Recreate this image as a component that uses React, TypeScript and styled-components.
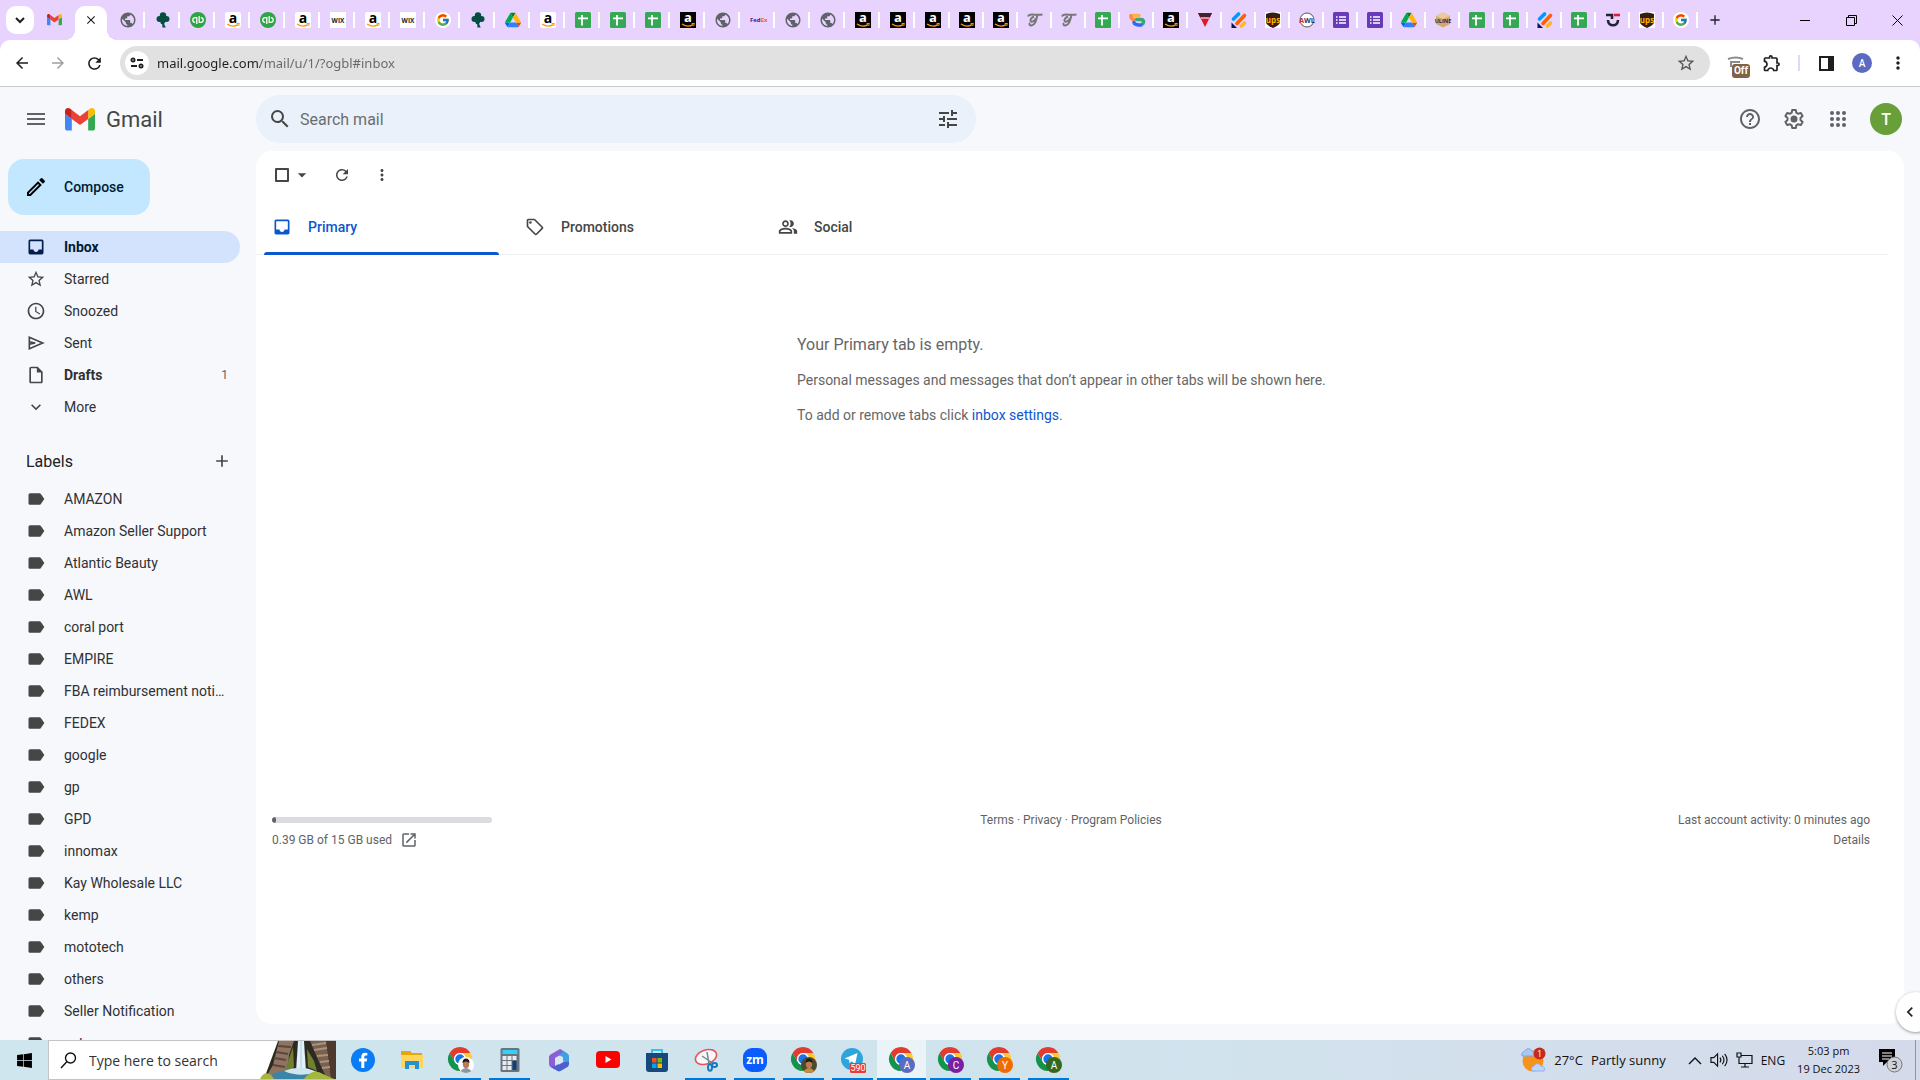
import React from 'react';

import styled, { createGlobalStyle } from 'styled-components';
import { FaWindows } from 'react-icons/fa';
import { FcGoogle } from 'react-icons/fc';
import {
  MdAdd,
  MdArrowBack,
  MdArrowDropDown,
  MdArrowForward,
  MdChevronLeft,
  MdClose,
  MdHelpOutline,
  MdInbox,
  MdKeyboardArrowDown,
  MdLabel,
  MdMenu,
  MdMoreVert,
  MdOpenInNew,
  MdOutlineExtension,
  MdOutlineInsertDriveFile,
  MdOutlineLocalOffer,
  MdOutlineModeEdit,
  MdOutlinePeopleAlt,
  MdPublic,
  MdRefresh,
  MdSchedule,
  MdSearch,
  MdStarBorder,
  MdTune,
} from 'react-icons/md';

const GlobalStyle = createGlobalStyle`
  * {
    box-sizing: border-box;
  }

  body {
    margin: 0;
    background: #f6f8fc;
    color: #202124;
    font-family: Roboto, 'Liberation Sans', sans-serif;
    font-size: 14px;
  }

  button {
    padding: 0;
    border: 0;
    background: none;
    color: inherit;
    font: inherit;
  }

  a {
    color: inherit;
    text-decoration: none;
  }

  svg {
    display: block;
    flex: none;
    overflow: visible;
  }
`;

const Shell = styled.div`
  display: flex;
  flex-direction: column;

  height: 100vh;
  overflow: hidden;
`;

/* Browser window */

const TabStrip = styled.div`
  display: flex;
  align-items: center;

  height: 40px;
  padding-left: 6px;

  background: #e8d3ff;
`;

const TabSearch = styled.button`
  display: grid;
  place-items: center;

  width: 28px;
  height: 28px;
  border-radius: 10px;

  background: #fff;
`;

const Tab = styled.button`
  position: relative;
  display: grid;
  place-items: center;

  width: 34px;
  height: 40px;

  &:nth-child(-n + 27) {
    width: 35px;
  }

  &::after {
    content: '';
    position: absolute;
    top: 12px;
    right: 0;
    width: 2px;
    height: 16px;
    background: #fff;
  }
`;

const PinnedTab = styled.button`
  display: grid;
  place-items: center;

  width: 41px;
  height: 40px;
`;

const ActiveTab = styled.button`
  position: relative;
  display: grid;
  place-items: center;
  align-self: flex-end;

  width: 32px;
  height: 34px;
  margin-right: 3px;
  padding-bottom: 6px;
  border-radius: 10px 10px 0 0;

  background: #fff;

  &::before,
  &::after {
    content: '';
    position: absolute;
    bottom: 0;
    width: 10px;
    height: 10px;
  }

  &::before {
    left: -10px;
    background: radial-gradient(circle at 0 0, transparent 10px, #fff 10px);
  }

  &::after {
    right: -10px;
    background: radial-gradient(circle at 100% 0, transparent 10px, #fff 10px);
  }
`;

const NewTab = styled.button`
  display: grid;
  place-items: center;

  width: 34px;
  height: 28px;
`;

const WindowButtons = styled.div`
  display: flex;

  margin-left: auto;
`;

const WindowButton = styled.button`
  display: grid;
  place-items: center;

  width: 46px;
  height: 40px;
`;

const AddressBar = styled.div`
  height: 47px;
  border-bottom: 1px solid #c7c9cc;

  background: linear-gradient(#e8d3ff, #e8d3ff) top / 100% 10px no-repeat;
`;

const AddressInner = styled.div`
  display: flex;
  align-items: center;

  height: 46px;
  padding: 0 4px;
  border-radius: 10px 10px 0 0;

  background: #fff;
`;

const BarButton = styled.button`
  display: grid;
  place-items: center;

  width: 36px;
  height: 34px;

  color: #1f1f1f;

  &:disabled {
    color: #a0a0a0;
  }
`;

const Omnibox = styled.div`
  display: flex;
  align-items: center;
  flex: 1;

  height: 34px;
  margin: 0 8px;
  padding: 0 14px 0 5px;
  border-radius: 17px;

  background: #e1e1e1;
`;

const SiteInfo = styled.button`
  display: grid;
  place-items: center;

  width: 24px;
  height: 24px;
  border-radius: 50%;

  background: #fff;
`;

const UrlInput = styled.input`
  flex: 1;

  min-width: 0;
  margin-left: 8px;
  padding: 0;
  border: 0;
  outline: 0;

  /* The host is darker than the path. */
  background: linear-gradient(90deg, #1f1f1f 103px, #666 103px);
  background-clip: text;
  -webkit-text-fill-color: transparent;

  font: 13px 'Noto Sans', 'Open Sans', sans-serif;
`;

const ExtensionButton = styled(BarButton)`
  position: relative;
`;

const OffBadge = styled.span`
  position: absolute;
  right: 4px;
  bottom: 2px;

  width: 18px;
  border-radius: 3px;

  background: #806246;
  color: #fff;

  font-weight: bold;
  font-size: 10px;
  line-height: 14px;
  text-align: center;
`;

const BarDivider = styled.span`
  width: 2px;
  height: 16px;
  margin: 0 8px;

  background: #e8d3ff;
`;

const Avatar = styled.button<{ $size: number; $color: string }>`
  display: grid;
  place-items: center;

  width: ${({ $size }) => $size}px;
  height: ${({ $size }) => $size}px;
  border-radius: 50%;

  background: ${({ $color }) => $color};
  color: #fff;

  font-weight: 500;
  font-size: ${({ $size }) => $size / 2}px;
`;

/* Mail */

const Mail = styled.div`
  position: relative;
  display: flex;
  flex-direction: column;
  flex: 1;

  min-height: 0;
`;

const Header = styled.header`
  display: flex;
  align-items: center;

  height: 64px;
  padding-right: 18px;
`;

const Brand = styled.div`
  display: flex;
  align-items: center;

  width: 256px;
  padding-left: 24px;

  color: #5f6368;
`;

const BrandLink = styled.a`
  display: flex;
  align-items: center;
  gap: 11px;

  margin-left: 17px;

  color: #444746;

  font-size: 22px;
`;

const SearchForm = styled.form`
  display: flex;
  align-items: center;
  flex: 0 1 720px;

  height: 48px;
  padding: 0 16px 0 12px;
  border-radius: 24px;

  background: #eaf1fb;
  color: #444746;
`;

const SearchInput = styled.input`
  flex: 1;

  min-width: 0;
  margin: 0 8px;
  padding: 0;
  border: 0;
  outline: 0;

  background: none;
  color: #444746;

  font: 16px Roboto, sans-serif;

  &::placeholder {
    color: #6b6e70;
  }
`;

const HeaderActions = styled.div`
  display: flex;
  align-items: center;
  gap: 20px;

  margin-left: auto;

  color: #5f6368;
`;

const Body = styled.div`
  display: flex;
  flex: 1;

  min-height: 0;
`;

const Sidebar = styled.nav`
  flex: 0 0 256px;

  padding-top: 8px;
  overflow: hidden;
`;

const ComposeButton = styled.button`
  display: flex;
  align-items: center;
  gap: 16px;

  min-width: 142px;
  height: 56px;
  margin: 0 0 16px 8px;
  padding: 0 16px;
  border-radius: 16px;

  background: #c2e7ff;
  color: #001d35;

  font-weight: 500;

  & svg {
    color: #000;
  }
`;

const NavList = styled.ul`
  margin: 0;
  padding: 0;

  list-style: none;
`;

const NavLink = styled.a<{ $active?: boolean; $strong?: boolean }>`
  display: flex;
  align-items: center;
  gap: 18px;

  height: 32px;
  margin-right: 16px;
  padding: 0 12px 0 26px;
  border-radius: 0 16px 16px 0;

  background: ${({ $active }) => ($active ? '#d3e3fd' : 'transparent')};
  color: ${({ $active }) => ($active ? '#001d35' : '#303134')};

  font-weight: ${({ $active, $strong }) => ($active || $strong ? 700 : 400)};

  & svg {
    color: ${({ $active }) => ($active ? '#041e49' : '#444746')};
  }
`;

const NavText = styled.span`
  flex: 1;

  overflow: hidden;

  text-overflow: ellipsis;
  white-space: nowrap;
`;

const NavCount = styled.span`
  color: #5f6368;

  font-weight: 400;
  font-size: 12px;
`;

const LabelsHeader = styled.div`
  display: flex;
  align-items: center;
  justify-content: space-between;

  height: 44px;
  margin-top: 16px;
  padding: 0 24px 0 26px;

  & > h2 {
    margin: 0;

    font-weight: 400;
    font-size: 16px;
  }
`;

const Panel = styled.main`
  display: flex;
  flex-direction: column;
  flex: 1;

  margin: 0 16px 16px 0;
  padding-right: 16px;
  border-radius: 16px;

  background: #fff;
`;

const Toolbar = styled.div`
  display: flex;
  align-items: center;

  height: 48px;
  padding-left: 19px;

  color: #444746;

  & > button {
    margin-left: 22px;
  }
`;

const SelectAll = styled.input`
  appearance: none;

  width: 14px;
  height: 14px;
  margin: 0;
  border: 2px solid #444746;
  border-radius: 1px;
`;

const SelectMenu = styled.button`
  && {
    margin: 0 -1px 0 3px;
  }
`;

const Categories = styled.div`
  display: flex;

  height: 56px;
  padding-left: 8px;
  border-bottom: 1px solid #eceff1;
`;

const Category = styled.button<{ $active?: boolean }>`
  position: relative;
  display: flex;
  align-items: center;
  gap: 16px;
  flex: 0 1 253px;

  padding-left: 8px;

  color: ${({ $active }) => ($active ? '#0b57d0' : '#444746')};

  font-weight: 500;

  &::after {
    content: '';
    position: absolute;
    right: 18px;
    bottom: -1px;
    left: 0;
    height: ${({ $active }) => ($active ? 3 : 0)}px;
    border-radius: 3px 3px 0 0;
    background: #0b57d0;
  }
`;

const EmptyState = styled.section`
  align-self: center;

  min-width: 540px;
  margin: 78px 10px 0 0;

  color: #666;

  & > h3 {
    margin: 0 0 13px;

    font-weight: 400;
    font-size: 16px;
    line-height: 24px;
  }

  & > p {
    margin: 0 0 15px;

    line-height: 20px;
  }

  & a {
    color: #0b57d0;
  }
`;

const Footer = styled.footer`
  display: grid;
  grid-template-columns: 1fr auto 1fr;

  margin-top: 370px;
  padding: 0 18px 0 16px;

  color: #5f6368;

  font-size: 12px;
  line-height: 20px;
`;

const StorageMeter = styled.div`
  width: 220px;
  height: 6px;
  margin: 7px 0;
  overflow: hidden;
  border-radius: 3px;

  background: #dadce0;
`;

const StorageFill = styled.div`
  width: 4px;
  height: 6px;
  border-radius: 2px;

  background: #5f6368;
`;

const StorageLink = styled.a`
  display: flex;
  align-items: center;
  gap: 8px;
`;

const Activity = styled.div`
  text-align: right;
`;

const SidePanelToggle = styled.button`
  position: absolute;
  right: -16px;
  bottom: 8px;
  display: flex;
  align-items: center;

  width: 40px;
  height: 40px;
  padding-left: 4px;
  border-radius: 50%;

  background: #fff;
  box-shadow: 0 1px 3px rgba(60, 64, 67, 0.5);
`;

/* Desktop taskbar */

const Taskbar = styled.div`
  display: flex;
  align-items: stretch;
  flex: none;

  height: 40px;

  background: linear-gradient(90deg, #cfe6ee, #d0e3ed 60%, #d5daea);
  color: #111;

  font-family: 'Open Sans', 'Noto Sans', sans-serif;
`;

const StartButton = styled.button`
  display: grid;
  place-items: center;

  width: 48px;
`;

const DesktopSearch = styled.label`
  display: flex;
  align-items: center;
  gap: 12px;

  width: 288px;
  margin-right: 2px;
  padding-left: 11px;
  border: 1px solid #c4c4c4;
  border-right: 0;

  background: #fff;

  & > input {
    flex: 1;

    min-width: 0;
    padding: 0;
    border: 0;
    outline: 0;

    background: none;

    font: 14px 'Open Sans', sans-serif;
  }

  & > input::placeholder {
    color: #333;
  }
`;

const TaskButton = styled.button<{ $running?: boolean; $focused?: boolean }>`
  position: relative;
  display: grid;
  place-items: center;

  width: 49px;

  background: ${({ $focused }) => ($focused ? '#eaf3f7' : 'transparent')};

  &::after {
    content: '';
    position: absolute;
    right: ${({ $focused }) => ($focused ? 0 : 4)}px;
    bottom: 0;
    left: ${({ $focused }) => ($focused ? 0 : 4)}px;
    height: ${({ $running }) => ($running ? 2 : 0)}px;
    background: #0078d7;
  }
`;

const Tray = styled.div`
  display: flex;
  align-items: center;

  margin-left: auto;
  padding-right: 4px;

  font-size: 12px;
`;

const Weather = styled.button`
  display: flex;
  align-items: center;
  gap: 8px;

  margin-right: 22px;

  font-size: 13px;
`;

const TrayIcons = styled.div`
  display: flex;
  align-items: center;
  gap: 8px;
`;

const Clock = styled.button`
  margin: 0 18px 0 12px;

  font-size: 11px;
  line-height: 18px;
  text-align: center;
  white-space: nowrap;
`;

const ShowDesktop = styled.span`
  align-self: stretch;

  width: 1px;
  margin-left: 12px;

  background: #8d95a3;
`;

const svgText = { fontFamily: 'Open Sans, sans-serif', fontWeight: 700 };

const GmailMark: React.FC<{ width: number }> = ({ width }) => (
  <svg width={width} height={(width * 3) / 4} viewBox="52 42 88 66">
    <path fill="#4285f4" d="M58 108h14V74L52 59v43c0 3.32 2.69 6 6 6" />
    <path fill="#34a853" d="M120 108h14c3.32 0 6-2.69 6-6V59l-20 15" />
    <path fill="#fbbc04" d="M120 48v26l20-15v-8c0-7.42-8.47-11.65-14.4-7.2" />
    <path fill="#ea4335" d="M72 74V48l24 18 24-18v26L96 92" />
    <path fill="#c5221f" d="M52 51v8l20 15V48l-5.6-4.2c-5.94-4.45-14.4-.22-14.4 7.2" />
  </svg>
);

const SendIcon: React.FC<{ size?: number }> = ({ size }) => (
  <svg width={size} height={size} viewBox="0 0 24 24" fill="none" stroke="currentColor" strokeWidth="2">
    <path d="M4 5l16 7-16 7zM4 10.500l7 1.500-7 1.500" />
  </svg>
);

const AmazonIcon: React.FC<{ dark?: boolean }> = ({ dark }) => (
  <svg width="16" height="16" viewBox="0 0 16 16">
    <rect width="16" height="16" rx={dark ? 0 : 2} fill={dark ? '#000' : '#fff'} />
    <text
      x="8"
      y={dark ? 10 : 11}
      textAnchor="middle"
      fontSize={dark ? 13 : 14}
      fill={dark ? '#fff' : '#000'}
      style={svgText}
    >
      a
    </text>
    <path d="M2 12q6 4 11 .6" fill="none" stroke="#f90" strokeWidth="1.4" />
    <path d="M11.6 11.6l2.8-.2-.8 2.6" fill="none" stroke="#f90" />
  </svg>
);

const SheetsIcon = () => (
  <svg width="16" height="16" viewBox="0 0 16 16">
    <rect width="16" height="16" rx="1.5" fill="#34a853" />
    <path d="M3 6.3h10M7 3v10.5" stroke="#fff" strokeWidth="1.8" />
  </svg>
);

const FormsIcon = () => (
  <svg width="16" height="16" viewBox="0 0 16 16">
    <rect width="16" height="16" rx="1.5" fill="#673ab7" />
    <path d="M6 5h7M6 8h7M6 11h7M3 5h1.5M3 8h1.5M3 11h1.5" stroke="#fff" strokeWidth="1.6" />
  </svg>
);

const CloverIcon = () => (
  <svg width="16" height="16" viewBox="0 0 16 16" fill="#044e42">
    <circle cx="8" cy="3.4" r="3.2" />
    <circle cx="4.5" cy="7" r="3" />
    <circle cx="11.5" cy="7" r="3" />
    <path d="M7 6h2.500l-.8 5 2 4.500H7.500L7 11zM5 9h6l-2 3H6z" />
  </svg>
);

const QuickbooksIcon = () => (
  <svg width="16" height="16" viewBox="0 0 16 16">
    <circle cx="8" cy="8" r="8" fill="#2ca543" />
    <g fill="none" stroke="#fff" strokeWidth="1.3">
      <path d="M6.800 12V5.600H5.200a2.400 2.400 0 0 0 0 4.800" />
      <path d="M9.200 4v6.400h1.600a2.400 2.400 0 0 0 0-4.800" />
    </g>
  </svg>
);

const DriveIcon = () => (
  <svg width="16" height="16" viewBox="0 0 87.3 78">
    <path fill="#0066da" d="m6.6 66.85 3.85 6.65c.8 1.4 1.95 2.5 3.3 3.3l13.75-23.8h-27.5c0 1.55.4 3.1 1.2 4.5z" />
    <path fill="#00ac47" d="m43.65 25-13.75-23.8c-1.35.8-2.5 1.9-3.3 3.3l-25.4 44a9.06 9.06 0 0 0 -1.2 4.5h27.5z" />
    <path fill="#ea4335" d="m73.55 76.8c1.35-.8 2.5-1.9 3.3-3.3l1.6-2.75 7.65-13.25c.8-1.4 1.2-2.95 1.2-4.5h-27.502l5.852 11.5z" />
    <path fill="#00832d" d="m43.65 25 13.75-23.8c-1.35-.8-2.9-1.2-4.5-1.2h-18.5c-1.6 0-3.15.45-4.5 1.2z" />
    <path fill="#2684fc" d="m59.8 53h-32.3l-13.75 23.8c1.35.8 2.9 1.2 4.5 1.2h50.8c1.6 0 3.15-.45 4.5-1.2z" />
    <path fill="#ffba00" d="m73.4 26.5-12.7-22c-.8-1.4-1.95-2.5-3.3-3.3l-13.75 23.8 16.15 28h27.45c0-1.55-.4-3.1-1.2-4.5z" />
  </svg>
);

const WixIcon = () => (
  <svg width="16" height="16" viewBox="0 0 16 16">
    <rect width="16" height="16" fill="#fff" />
    <text x="8" y="10.500" textAnchor="middle" fontSize="6.500" fill="#222" style={svgText}>
      WIX
    </text>
  </svg>
);

const FedexIcon = () => (
  <svg width="16" height="16" viewBox="0 0 16 16">
    <text x="0" y="10" fontSize="6" fill="#4d148c" style={svgText}>
      Fed<tspan fill="#ff6200">Ex</tspan>
    </text>
  </svg>
);

const ScriptIcon = () => (
  <svg width="16" height="16" viewBox="0 0 16 16" fill="none" stroke="#777" strokeWidth="2">
    <path d="M1 4.500C2 1 8 3.500 15.500 2.500M10.500 3C9 9 8 13 4.500 13.500c-2 .2-2.500-1.500-1.500-2.500M7 4.500C4 6 2.500 8 4 9.500c2 .8 4-1.500 5-3" />
  </svg>
);

const RibbonIcon = () => (
  <svg width="16" height="16" viewBox="0 0 16 16" fill="none" strokeWidth="3.600" strokeLinecap="round">
    <path d="M2 3.500h8" stroke="#fbb04c" />
    <path d="M2 4C2 7 3 7.500 6 7.500" stroke="#f98c4c" />
    <path d="M8 7.500h4c2.500 0 3 2 2 4" stroke="#34a877" />
    <path d="M5 10.500q1 3 7 2.500" stroke="#2d6bf6" />
  </svg>
);

const TriangleIcon = () => (
  <svg width="16" height="16" viewBox="0 0 16 16">
    <path d="M1 1h14L8 15z" fill="#e0182d" />
    <path d="M1 1h14l-2 4H3z" fill="#46202f" />
    <path d="M4 6h8" stroke="#fff" />
  </svg>
);

const JotformIcon = () => (
  <svg width="16" height="16" viewBox="0 0 16 16" fill="none" strokeWidth="3.600" strokeLinecap="round">
    <path d="M2.500 7L7.500 2" stroke="#0099ff" />
    <path d="M6 11.500l7.500-8" stroke="#ff6100" />
    <path d="M10.500 14l3-3" stroke="#ffb629" />
    <path d="M.5 10.500V16H6z" fill="#0a1551" />
  </svg>
);

const UpsIcon = () => (
  <svg width="16" height="16" viewBox="0 0 16 16">
    <rect width="16" height="16" fill="#fff" />
    <path d="M1 2q7-3 14 0v8q0 3-7 6-7-3-7-6z" fill="#351c15" />
    <text x="8" y="11" textAnchor="middle" fontSize="8" fill="#ffb500" style={svgText}>
      ups
    </text>
  </svg>
);

const RoundelIcon = () => (
  <svg width="16" height="16" viewBox="0 0 16 16">
    <circle cx="8" cy="8" r="7" fill="#fff" stroke="#555" />
    <text x="8" y="10.500" textAnchor="middle" fontSize="7" fill="#26386e" style={svgText}>
      <tspan fill="#d7263d">A</tspan>WL
    </text>
  </svg>
);

const UlineIcon = () => (
  <svg width="16" height="16" viewBox="0 0 16 16">
    <path d="M1 4l7-3.500L15 4v8l-7 3.500L1 12z" fill="#d3a86f" />
    <path d="M1 4l7 3 7-3-7-3.500z" fill="#ebcb9a" />
    <text x="8" y="11" textAnchor="middle" fontSize="5.500" fill="#1b2a55" style={svgText}>
      ULINE
    </text>
  </svg>
);

const HookIcon = () => (
  <svg width="16" height="16" viewBox="0 0 16 16" fill="none" strokeWidth="2.600">
    <path d="M1 3h6v4" stroke="#20242e" />
    <path d="M9 3h6" stroke="#e11d36" />
    <path d="M3 8c0 7 10 7 10 0" stroke="#20242e" />
  </svg>
);

const GlobeIcon = () => <MdPublic size={18} color="#5f6368" />;
const DarkAmazonIcon = () => <AmazonIcon dark />;
const GoogleIcon = () => (
  <svg width="16" height="16" viewBox="0 0 16 16">
    <circle cx="8" cy="8" r="8" fill="#fff" />
    <FcGoogle x="1" y="1" size={14} />
  </svg>
);

const tabs: { name: string; Icon: React.FC }[] = [
  { name: 'Web page', Icon: GlobeIcon },
  { name: 'Clover', Icon: CloverIcon },
  { name: 'QuickBooks', Icon: QuickbooksIcon },
  { name: 'Amazon', Icon: AmazonIcon },
  { name: 'QuickBooks', Icon: QuickbooksIcon },
  { name: 'Amazon', Icon: AmazonIcon },
  { name: 'Wix', Icon: WixIcon },
  { name: 'Amazon', Icon: AmazonIcon },
  { name: 'Wix', Icon: WixIcon },
  { name: 'Google', Icon: GoogleIcon },
  { name: 'Clover', Icon: CloverIcon },
  { name: 'Drive', Icon: DriveIcon },
  { name: 'Amazon', Icon: AmazonIcon },
  { name: 'Sheets', Icon: SheetsIcon },
  { name: 'Sheets', Icon: SheetsIcon },
  { name: 'Sheets', Icon: SheetsIcon },
  { name: 'Amazon', Icon: DarkAmazonIcon },
  { name: 'Web page', Icon: GlobeIcon },
  { name: 'FedEx', Icon: FedexIcon },
  { name: 'Web page', Icon: GlobeIcon },
  { name: 'Web page', Icon: GlobeIcon },
  { name: 'Amazon', Icon: DarkAmazonIcon },
  { name: 'Amazon', Icon: DarkAmazonIcon },
  { name: 'Amazon', Icon: DarkAmazonIcon },
  { name: 'Amazon', Icon: DarkAmazonIcon },
  { name: 'Amazon', Icon: DarkAmazonIcon },
  { name: 'Shop', Icon: ScriptIcon },
  { name: 'Shop', Icon: ScriptIcon },
  { name: 'Sheets', Icon: SheetsIcon },
  { name: 'Dashboard', Icon: RibbonIcon },
  { name: 'Amazon', Icon: DarkAmazonIcon },
  { name: 'Store', Icon: TriangleIcon },
  { name: 'Jotform', Icon: JotformIcon },
  { name: 'UPS', Icon: UpsIcon },
  { name: 'AWL', Icon: RoundelIcon },
  { name: 'Forms', Icon: FormsIcon },
  { name: 'Forms', Icon: FormsIcon },
  { name: 'Drive', Icon: DriveIcon },
  { name: 'Uline', Icon: UlineIcon },
  { name: 'Sheets', Icon: SheetsIcon },
  { name: 'Sheets', Icon: SheetsIcon },
  { name: 'Jotform', Icon: JotformIcon },
  { name: 'Sheets', Icon: SheetsIcon },
  { name: 'Tactical', Icon: HookIcon },
  { name: 'UPS', Icon: UpsIcon },
  { name: 'Google', Icon: GoogleIcon },
];

const folders = [
  { name: 'Inbox', Icon: MdInbox, active: true },
  { name: 'Starred', Icon: MdStarBorder },
  { name: 'Snoozed', Icon: MdSchedule },
  { name: 'Sent', Icon: SendIcon },
  { name: 'Drafts', Icon: MdOutlineInsertDriveFile, count: 1 },
  { name: 'More', Icon: MdKeyboardArrowDown },
];

const labels = [
  'AMAZON',
  'Amazon Seller Support',
  'Atlantic Beauty',
  'AWL',
  'coral port',
  'EMPIRE',
  'FBA reimbursement notification',
  'FEDEX',
  'google',
  'gp',
  'GPD',
  'innomax',
  'Kay Wholesale LLC',
  'kemp',
  'mototech',
  'others',
  'Seller Notification',
  'set',
];

interface ChromeIconProps {
  letter?: string;
  color?: string;
  photo?: 'white' | 'forest';
}

/**
 * The Chrome logo with the badge of the profile that the window belongs to.
 */
const ChromeIcon: React.FC<ChromeIconProps> = ({ letter, color, photo }) => (
  <svg width="26" height="26" viewBox="0 0 26 26">
    <g transform="scale(.5)">
      <path fill="#e33b2e" d="M24 12h20.800A24 24 0 0 0 3.200 12L13.600 30A12 12 0 0 1 24 12z" />
      <path fill="#16934a" d="M13.600 30 3.200 12A24 24 0 0 0 24 48L34.400 30a12 12 0 0 1-20.800 0z" />
      <path fill="#fcc934" d="M24 12a12 12 0 0 1 10.400 18L24 48A24 24 0 0 0 44.800 12z" />
      <circle cx="24" cy="24" r="12" fill="#fff" />
      <circle cx="24" cy="24" r="9.400" fill="#1a73e8" />
    </g>
    {letter && (
      <>
        <circle cx="18" cy="18" r="8" fill={color} />
        <text x="18" y="21.500" textAnchor="middle" fontSize="10" fill="#fff" fontFamily="Roboto">
          {letter}
        </text>
      </>
    )}
    {photo && (
      <>
        <circle cx="18" cy="18" r="8" fill={photo === 'white' ? '#fff' : '#4d4a2b'} />
        <path d="M12.500 24q5.500-6 11 0-5.500 4-11 0z" fill={photo === 'white' ? '#8b95a5' : '#c98b3c'} />
        <ellipse cx="18" cy="17" rx="3.200" ry="4.200" fill="#b97b56" />
        <path d="M14.500 16q0-4.500 3.500-4.500t3.500 4.500q-3.500-3-7 0z" fill="#221a17" />
      </>
    )}
  </svg>
);

const FacebookIcon = () => (
  <svg width="24" height="24" viewBox="0 0 24 24">
    <circle cx="12" cy="12" r="12" fill="#0a7cf5" />
    <path d="M13.300 20v-6.500h2.400l.5-2.900h-2.900V9c0-.9.4-1.600 1.700-1.600h1.300V5q-6-1.200-6 3.600v2H8v2.900h2.300V20z" fill="#fff" />
  </svg>
);

const FolderIcon = () => (
  <svg width="22" height="20" viewBox="0 0 22 20">
    <path d="M0 1h9l2 2h10v15H0z" fill="#e5a50f" />
    <path d="M0 5h22v13H0z" fill="#ffd65c" />
    <path d="M4 11h14v8h-4v-4H8v4H4z" fill="#2590d5" />
  </svg>
);

const CalculatorIcon = () => (
  <svg width="20" height="24" viewBox="0 0 20 24">
    <rect width="19" height="24" x=".5" rx="1.500" fill="#6a7480" />
    <rect width="15" height="4" x="2.500" y="2" fill="#35d0f5" />
    <path d="M4.500 8v14M9.500 8v14M14.500 8v5" stroke="#e8ecef" strokeWidth="4" strokeDasharray="4 1" />
    <path d="M14.500 13v9" stroke="#123f7d" strokeWidth="4" />
  </svg>
);

const OfficeIcon = () => (
  <svg width="20" height="24" viewBox="0 0 20 24">
    <path d="M11 1L1.500 6.500Q0 7.500 0 9v7q0 2 1.500 3L6 21.500V10l8-4.500V3q-1-1.500-3-2z" fill="#8b5fd6" />
    <path d="M14 2.500l4.500 3Q20 6.500 20 8v8l-6-3.500V9L9.500 7 14 4z" fill="#3fa0e4" />
    <path d="M20 14v2q0 2-1.500 3L11.500 23q-1.500.8-3 0L2 19l5-1.500 7-4z" fill="#4f5fd2" />
    <path d="M10 8l4 2.200v4L10 16.500l-4-2.300v-4z" fill="#d9e6f0" />
  </svg>
);

const YoutubeIcon = () => (
  <svg width="24" height="18" viewBox="0 0 24 18">
    <rect width="24" height="17" rx="4" fill="#f00" />
    <path d="M9.500 5l6 3.500-6 3.500z" fill="#fff" />
  </svg>
);

const StoreIcon = () => (
  <svg width="24" height="24" viewBox="0 0 24 24">
    <path d="M7 6V2h10v4" fill="none" stroke="#35c1f1" strokeWidth="2" />
    <path d="M1 5h22v16q0 3-3 3H4q-3 0-3-3z" fill="#174a7c" />
    <path d="M7 10h4.500v4.500H7z" fill="#f25022" />
    <path d="M12.500 10H17v4.500h-4.500z" fill="#7fba00" />
    <path d="M7 15.500h4.500V20H7z" fill="#00a4ef" />
    <path d="M12.500 15.500H17V20h-4.500z" fill="#ffb900" />
  </svg>
);

const SnipIcon = () => (
  <svg width="24" height="24" viewBox="0 0 24 24" fill="none">
    <ellipse cx="12" cy="9" rx="11" ry="7" fill="#f6f8fa" stroke="#e0555e" strokeWidth="1.500" transform="rotate(-20 12 9)" />
    <path d="M13 4l2 12M8 8l12 8" stroke="#7c8791" strokeWidth="1.500" />
    <ellipse cx="16" cy="19.500" rx="2" ry="3.200" stroke="#1479bf" strokeWidth="2" />
    <ellipse cx="20.500" cy="17" rx="2.500" ry="2" stroke="#1479bf" strokeWidth="2" />
  </svg>
);

const ZoomIcon = () => (
  <svg width="24" height="24" viewBox="0 0 24 24">
    <rect width="24" height="24" rx="9" fill="#0b5cff" />
    <text x="12" y="16" textAnchor="middle" fontSize="12" fill="#fff" style={svgText}>
      zm
    </text>
  </svg>
);

const TelegramIcon = () => (
  <svg width="26" height="26" viewBox="0 0 26 26">
    <circle cx="12" cy="12" r="11" fill="#2ca5dc" />
    <path d="M4.500 11.500L17.500 6l-2.300 11-3.700-2.700-2 2-.5-3.500z" fill="#fff" />
    <rect x="10" y="16" width="16" height="10" rx="1.500" fill="#ee3a36" />
    <text x="18" y="24" textAnchor="middle" fontSize="9" fill="#fff" fontFamily="Roboto">
      590
    </text>
  </svg>
);

const Waterfall = () => (
  <svg width="76" height="38" viewBox="0 0 76 38">
    <path d="M18 0h58v38H4z" fill="#2c2a22" />
    <path d="M19 0h15l-5 14-2 24H5l8-14z" fill="#8f7462" />
    <path d="M18 5l13 1M16 11l12 2M14 17l12 2M13 24l12 2" stroke="#5d473a" strokeWidth="2" />
    <path d="M33 6l-7 20 1 6 7-6z" fill="#70802f" />
    <path d="M47 8l7 12 3 10-9-4z" fill="#70802f" />
    <path d="M38 0h6l2 31H36z" fill="#e3f1f8" />
    <path d="M41 0v30" stroke="#a3cbe0" />
    <path d="M12 33q25-9 48 0l-4 5H14z" fill="#3a84aa" />
    <path d="M24 30q17-7 33 1-17 6-33-1z" fill="#cfe6f1" />
    <path d="M50 0h26v38h-9l-8-17z" fill="#7a604e" />
    <path d="M66 0h10v38h-5z" fill="#4d392d" />
    <path d="M52 4l14-2M54 9l13-2M57 15l11-1M60 21l9-1M62 27l8-1" stroke="#ad937c" strokeWidth="2" />
    <path d="M0 38q4-9 11-4l3 4zM44 38q9-12 19-5l11 5z" fill="#a3b83c" />
  </svg>
);

const apps: { name: string; icon: React.ReactNode; running?: boolean; focused?: boolean }[] = [
  { name: 'Facebook', icon: <FacebookIcon /> },
  { name: 'File Explorer', icon: <FolderIcon /> },
  { name: 'Chrome', icon: <ChromeIcon photo="white" />, running: true },
  { name: 'Calculator', icon: <CalculatorIcon />, running: true },
  { name: 'Microsoft 365', icon: <OfficeIcon /> },
  { name: 'YouTube', icon: <YoutubeIcon /> },
  { name: 'Microsoft Store', icon: <StoreIcon /> },
  { name: 'Snipping Tool', icon: <SnipIcon />, running: true },
  { name: 'Zoom', icon: <ZoomIcon />, running: true },
  { name: 'Chrome', icon: <ChromeIcon photo="forest" />, running: true },
  { name: 'Telegram', icon: <TelegramIcon />, running: true },
  { name: 'Chrome', icon: <ChromeIcon letter="A" color="#5c6bc0" />, running: true, focused: true },
  { name: 'Chrome', icon: <ChromeIcon letter="C" color="#7b1fa2" />, running: true },
  { name: 'Chrome', icon: <ChromeIcon letter="Y" color="#ef6c00" />, running: true },
  { name: 'Chrome', icon: <ChromeIcon letter="A" color="#33691e" />, running: true },
];

const BrowserChrome = () => (
  <>
    <TabStrip>
      <TabSearch aria-label="Search tabs">
        <svg width="10" height="8" viewBox="0 0 10 8" fill="none" stroke="#1f1f1f" strokeWidth="2">
          <path d="M1 2l4 4 4-4" />
        </svg>
      </TabSearch>
      <PinnedTab aria-label="Gmail">
        <GmailMark width={15} />
      </PinnedTab>
      <ActiveTab aria-label="Close tab">
        <MdClose size={14} />
      </ActiveTab>
      {tabs.map(({ name, Icon }, index) => (
        <Tab key={index} aria-label={name}>
          <Icon />
        </Tab>
      ))}
      <NewTab aria-label="New tab">
        <MdAdd size={16} />
      </NewTab>
      <WindowButtons>
        <WindowButton aria-label="Minimize">
          <svg width="10" height="10" stroke="#000">
            <path d="M0 5.500h10" />
          </svg>
        </WindowButton>
        <WindowButton aria-label="Restore">
          <svg width="11" height="11" fill="none" stroke="#000">
            <path d="M.5 2.500h8v8h-8zM2.500 2.500v-2h8v8h-2" />
          </svg>
        </WindowButton>
        <WindowButton aria-label="Close">
          <svg width="11" height="11" stroke="#000">
            <path d="M.5.500l10 10M10.500.500l-10 10" />
          </svg>
        </WindowButton>
      </WindowButtons>
    </TabStrip>
    <AddressBar>
      <AddressInner>
        <BarButton aria-label="Back">
          <MdArrowBack size={18} />
        </BarButton>
        <BarButton aria-label="Forward" disabled>
          <MdArrowForward size={18} />
        </BarButton>
        <BarButton aria-label="Reload">
          <MdRefresh size={19} />
        </BarButton>
        <Omnibox>
          <SiteInfo aria-label="View site information">
            <svg width="14" height="12" viewBox="0 0 14 12" fill="none" stroke="#1f1f1f" strokeWidth="1.800">
              <circle cx="3" cy="3" r="1.600" />
              <circle cx="11" cy="9" r="1.600" />
              <path d="M7 3h6M1 9h6" />
            </svg>
          </SiteInfo>
          <UrlInput aria-label="Address" defaultValue="mail.google.com/mail/u/1/?ogbl#inbox" />
          <button aria-label="Bookmark this tab">
            <MdStarBorder size={20} color="#555" />
          </button>
        </Omnibox>
        <ExtensionButton aria-label="Extension">
          <svg width="18" height="14" viewBox="0 0 18 14" fill="none" stroke="#8c8c8c" strokeWidth="2">
            <path d="M1 3q8-3 15 0M3 6h10M4 6v5" />
          </svg>
          <OffBadge>Off</OffBadge>
        </ExtensionButton>
        <BarButton aria-label="Extensions">
          <MdOutlineExtension size={20} />
        </BarButton>
        <BarDivider />
        <BarButton aria-label="Side panel">
          <svg width="15" height="15" viewBox="0 0 15 15" fill="none" stroke="#1f1f1f" strokeWidth="2">
            <path d="M1 1h13v13H1z" />
            <path d="M11.500 1v13" strokeWidth="5" />
          </svg>
        </BarButton>
        <BarButton as="div">
          <Avatar $size={20} $color="#5c6bc0" aria-label="Profile">
            A
          </Avatar>
        </BarButton>
        <BarButton aria-label="Menu">
          <MdMoreVert size={20} />
        </BarButton>
      </AddressInner>
    </AddressBar>
  </>
);

const MailHeader = () => (
  <Header>
    <Brand>
      <button aria-label="Main menu">
        <MdMenu size={24} />
      </button>
      <BrandLink href="#inbox">
        <GmailMark width={30} />
        Gmail
      </BrandLink>
    </Brand>
    <SearchForm>
      <button type="button" aria-label="Search">
        <MdSearch size={24} />
      </button>
      <SearchInput aria-label="Search mail" placeholder="Search mail" />
      <button type="button" aria-label="Search options">
        <MdTune size={24} />
      </button>
    </SearchForm>
    <HeaderActions>
      <button aria-label="Support">
        <MdHelpOutline size={24} />
      </button>
      <button aria-label="Settings">
        <svg width="24" height="24" viewBox="0 0 24 24" fill="none" stroke="currentColor" strokeWidth="2">
          <path
            strokeLinejoin="round"
            d="M10.200 3h3.600l.5 2.700 1.900 1.100 2.600-.9 1.800 3.100-2.100 1.900v2.200l2.100 1.900-1.800 3.100-2.600-.9-1.900 1.100-.5 2.700h-3.600l-.5-2.700-1.900-1.100-2.600.9L3.400 15l2.100-1.900v-2.200L3.400 9l1.800-3.100 2.600.9 1.900-1.100z"
          />
          <circle cx="12" cy="12" r="3.500" fill="currentColor" stroke="none" />
        </svg>
      </button>
      <button aria-label="Google apps">
        <svg width="24" height="24" viewBox="0 0 24 24" fill="currentColor">
          {[6, 12, 18].map((y) =>
            [6, 12, 18].map((x) => <circle key={`${x}-${y}`} cx={x} cy={y} r="2" />)
          )}
        </svg>
      </button>
      <Avatar $size={32} $color="#689f38" aria-label="Google account">
        T
      </Avatar>
    </HeaderActions>
  </Header>
);

const MailSidebar = () => (
  <Sidebar>
    <ComposeButton>
      <MdOutlineModeEdit size={24} />
      Compose
    </ComposeButton>
    <NavList>
      {folders.map(({ name, Icon, active, count }) => (
        <li key={name}>
          <NavLink href={`#${name}`} $active={active} $strong={!!count}>
            <Icon size={20} />
            <NavText>{name}</NavText>
            {count && <NavCount>{count}</NavCount>}
          </NavLink>
        </li>
      ))}
    </NavList>
    <LabelsHeader>
      <h2>Labels</h2>
      <button aria-label="Create new label">
        <MdAdd size={20} color="#444746" />
      </button>
    </LabelsHeader>
    <NavList>
      {labels.map((label) => (
        <li key={label}>
          <NavLink href={`#${label}`}>
            <MdLabel size={20} />
            <NavText>{label}</NavText>
          </NavLink>
        </li>
      ))}
    </NavList>
  </Sidebar>
);

const MailPanel = () => (
  <Panel>
    <Toolbar>
      <SelectAll type="checkbox" aria-label="Select all" />
      <SelectMenu aria-label="Select">
        <MdArrowDropDown size={20} />
      </SelectMenu>
      <button aria-label="Refresh">
        <MdRefresh size={18} />
      </button>
      <button aria-label="More">
        <MdMoreVert size={18} />
      </button>
    </Toolbar>
    <Categories>
      <Category $active>
        <MdInbox size={20} />
        Primary
      </Category>
      <Category>
        <MdOutlineLocalOffer size={20} />
        Promotions
      </Category>
      <Category>
        <MdOutlinePeopleAlt size={20} />
        Social
      </Category>
    </Categories>
    <EmptyState>
      <h3>Your Primary tab is empty.</h3>
      <p>Personal messages and messages that don’t appear in other tabs will be shown here.</p>
      <p>
        To add or remove tabs click <a href="#settings">inbox settings</a>.
      </p>
    </EmptyState>
    <Footer>
      <div>
        <StorageMeter>
          <StorageFill />
        </StorageMeter>
        <StorageLink href="#storage">
          0.39 GB of 15 GB used
          <MdOpenInNew size={18} />
        </StorageLink>
      </div>
      <div>
        <a href="#terms">Terms</a> · <a href="#privacy">Privacy</a> ·{' '}
        <a href="#policies">Program Policies</a>
      </div>
      <Activity>
        <div>Last account activity: 0 minutes ago</div>
        <a href="#details">Details</a>
      </Activity>
    </Footer>
  </Panel>
);

const DesktopTaskbar = () => (
  <Taskbar>
    <StartButton aria-label="Start">
      <FaWindows size={17} color="#000" />
    </StartButton>
    <DesktopSearch>
      <svg width="17" height="17" viewBox="0 0 17 17" fill="none" stroke="#111" strokeWidth="1.400">
        <circle cx="10.500" cy="6" r="5" />
        <path d="M7 9.500L1 16" />
      </svg>
      <input aria-label="Type here to search" placeholder="Type here to search" />
      <Waterfall />
    </DesktopSearch>
    {apps.map(({ name, icon, running, focused }, index) => (
      <TaskButton key={index} aria-label={name} $running={running} $focused={focused}>
        {icon}
      </TaskButton>
    ))}
    <Tray>
      <Weather>
        <svg width="25" height="26" viewBox="0 0 25 26">
          <circle cx="12" cy="14" r="10.500" fill="#f6921e" />
          <path d="M1 9q-1-4 3-5 3-5 7 0 4 1 2 5z" fill="#a9c8f5" stroke="#7fa6e0" />
          <path d="M11 24q-2-4 2-5 3-5 7 0 5 1 3 5z" fill="#bcd5fa" stroke="#8fb3ea" />
          <circle cx="18.500" cy="6.500" r="6" fill="#c42b1c" />
          <text x="18.500" y="10" textAnchor="middle" fontSize="9" fill="#fff" fontFamily="Open Sans">
            1
          </text>
        </svg>
        <span>27°C</span>
        <span>Partly sunny</span>
      </Weather>
      <TrayIcons>
        <svg width="14" height="9" viewBox="0 0 14 9" fill="none" stroke="#111" strokeWidth="1.400">
          <path d="M1 8l6-6 6 6" />
        </svg>
        <svg width="18" height="16" viewBox="0 0 19 16" fill="none" stroke="#111" strokeWidth="1.200">
          <path d="M1 5.500h3l4-4v13l-4-4H1zM10.500 5.500q2 2.500 0 5M13 3.500q3.500 4.500 0 9M15.500 1.500q5 6.500 0 13" />
        </svg>
        <svg width="17" height="16" viewBox="0 0 17 16" fill="none" stroke="#111" strokeWidth="1.200">
          <path d="M5 3.500h11v8H3V7M9 11.500V15M5 15h8M1 1h4v4H1zM3 5v3" />
        </svg>
        <span>ENG</span>
      </TrayIcons>
      <Clock>
        5:03 pm
        <br />
        19 Dec 2023
      </Clock>
      <svg width="25" height="26" viewBox="0 0 25 26">
        <path d="M1 2h16v13H9l-4 4v-4H1z" fill="#000" />
        <path d="M4 6h10M4 9h10M4 12h7" stroke="#fff" strokeWidth="1.200" />
        <circle cx="16.500" cy="17.500" r="7.500" fill="#d0d2d6" stroke="#777" />
        <text x="16.500" y="21.500" textAnchor="middle" fontSize="11" fill="#111" fontFamily="Open Sans">
          3
        </text>
      </svg>
      <ShowDesktop />
    </Tray>
  </Taskbar>
);

const App: React.FC = () => (
  <Shell>
    <GlobalStyle />
    <BrowserChrome />
    <Mail>
      <MailHeader />
      <Body>
        <MailSidebar />
        <MailPanel />
      </Body>
      <SidePanelToggle aria-label="Show side panel">
        <MdChevronLeft size={20} />
      </SidePanelToggle>
    </Mail>
    <DesktopTaskbar />
  </Shell>
);

export default App;
